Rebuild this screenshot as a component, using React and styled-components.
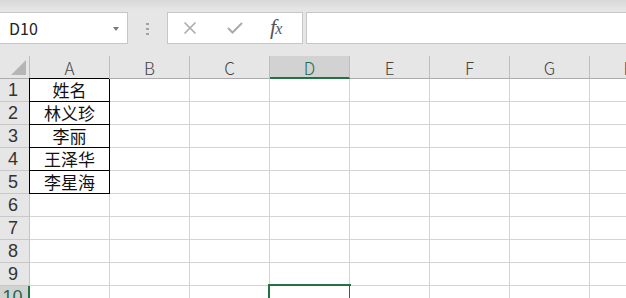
import React from "react";
import styled, { createGlobalStyle } from "styled-components";

const GREEN = "#217346";
const FONT = `"Noto Sans CJK SC", "Noto Sans", sans-serif`;

const Global = createGlobalStyle`
  html, body { margin: 0; padding: 0; overflow: hidden; background: #e6e6e6; }
  body { font-family: ${FONT}; }
  * { box-sizing: border-box; }
`;

const Page = styled.div`
  width: 626px;
  height: 298px;
  overflow: hidden;
  display: flex;
  flex-direction: column;
  background: #e6e6e6;
`;

const Toolbar = styled.div`
  height: 56px;
  flex: none;
  display: flex;
  align-items: flex-start;
  padding-top: 12px;
  background: linear-gradient(#d8d8d8 0px, #e4e4e4 8px, #e6e6e6 12px);
`;

const Box = styled.div`
  height: 32px;
  background: #fff;
  border: 1px solid #c6c6c6;
  display: flex;
  align-items: center;
`;

const NameBox = styled(Box)`
  width: 129px;
  margin-left: -1px;
  padding-left: 9px;
  padding-right: 8px;
  justify-content: space-between;
  font-size: 16px;
  color: #222;
`;

const Caret = styled.span`
  width: 0;
  height: 0;
  border-left: 3.5px solid transparent;
  border-right: 3.5px solid transparent;
  border-top: 4px solid #7a7a7a;
  margin-top: 1px;
`;

const Grip = styled.div`
  width: 39px;
  height: 32px;
  display: flex;
  flex-direction: column;
  align-items: center;
  justify-content: center;
  gap: 3px;
  margin-top: 1px;
`;

const Dot = styled.span`
  width: 3px;
  height: 2px;
  background: #a2a2a2;
`;

const Buttons = styled(Box)`
  width: 136px;
  padding-left: 15px;
  gap: 30px;
`;

const FxText = styled.span`
  font-family: "Liberation Serif", "DejaVu Serif", serif;
  font-style: italic;
  font-size: 22px;
  color: #555;
  margin-left: -3px;
  margin-top: -2px;
  letter-spacing: -1px;
  line-height: 1;
  small { font-size: 16px; }
`;

const FormulaInput = styled(Box)`
  flex: 1;
  margin-left: 3px;
  margin-right: -2px;
`;

const Sheet = styled.div`
  display: grid;
  grid-template-columns: 30px repeat(8, 80px);
  grid-auto-rows: 23px;
  font-family: ${FONT};
`;

const Corner = styled.div`
  position: relative;
  background: #e6e6e6;
  border-right: 1px solid #bdbdbd;
  border-bottom: 1px solid #ababab;
  &::after {
    content: "";
    position: absolute;
    right: 3px;
    bottom: 3px;
    width: 0;
    height: 0;
    border-left: 15px solid transparent;
    border-bottom: 15px solid #b5b5b5;
  }
`;

const ColHead = styled.div`
  background: ${(p) => (p.$selected ? "#d2d2d2" : "#e6e6e6")};
  border-right: 1px solid #bdbdbd;
  border-bottom: ${(p) => (p.$selected ? `2px solid ${GREEN}` : "1px solid #ababab")};
  color: ${(p) => (p.$selected ? "#1e6b45" : "#444")};
  font-size: 17px;
  font-weight: 300;
  display: flex;
  align-items: center;
  justify-content: center;
  line-height: 1;
  padding-top: ${(p) => (p.$selected ? "2px" : "1px")};
`;

const RowHead = styled.div`
  background: ${(p) => (p.$selected ? "#d2d2d2" : "#e6e6e6")};
  border-right: ${(p) => (p.$selected ? `2px solid ${GREEN}` : "1px solid #c4c4c4")};
  border-bottom: 1px solid #c8c8c8;
  color: ${(p) => (p.$selected ? "#1e6b45" : "#333")};
  font-family: "Liberation Sans", Arial, sans-serif;
  font-size: 18px;
  display: flex;
  align-items: flex-end;
  justify-content: center;
  padding-right: 3px;
  padding-bottom: 2px;
  line-height: 1;
`;

const Cell = styled.div`
  position: relative;
  background: #fff;
  border-right: 1px solid ${(p) => (p.$boxed ? "#000" : "#d4d4d4")};
  border-bottom: 1px solid ${(p) => (p.$boxed ? "#000" : "#d4d4d4")};
  box-shadow: ${(p) =>
    p.$boxed ? (p.$top ? "-1px 0 0 #000, -1px -1px 0 #000" : "-1px 0 0 #000") : "none"};
  z-index: ${(p) => (p.$boxed ? 1 : 0)};
  display: flex;
  align-items: flex-end;
  justify-content: center;
  font-size: 17px;
  color: #111;
  line-height: 1;
  padding-bottom: 3px;
`;

const Selection = styled.div`
  position: absolute;
  top: -2px;
  left: -2px;
  right: -2px;
  bottom: -2px;
  border: 2px solid ${GREEN};
  z-index: 2;
`;

const cols = ["A", "B", "C", "D", "E", "F", "G", "H"];
const names = ["姓名", "林义珍", "李丽", "王泽华", "李星海"];

const XIcon = () => (
  <svg width="14" height="14" viewBox="0 0 14 14">
    <path d="M1.5 1.5 L12.5 12.5 M12.5 1.5 L1.5 12.5" stroke="#ababab" strokeWidth="1.6" fill="none" />
  </svg>
);

const CheckIcon = () => (
  <svg width="16" height="14" viewBox="0 0 16 14">
    <path d="M1 7 L5.5 11.5 L15 2" stroke="#ababab" strokeWidth="2" fill="none" />
  </svg>
);

export default function App() {
  const rows = [];
  for (let r = 1; r <= 10; r++) {
    rows.push(
      <RowHead key={`h${r}`} $selected={r === 10}>
        {r}
      </RowHead>
    );
    cols.forEach((c, i) => {
      const boxed = i === 0 && r <= 5;
      rows.push(
        <Cell key={`${c}${r}`} $boxed={boxed} $top={boxed && r === 1}>
          {boxed ? names[r - 1] : null}
          {c === "D" && r === 10 ? <Selection /> : null}
        </Cell>
      );
    });
  }
  return (
    <Page>
      <Global />
      <Toolbar>
        <NameBox>
          D10
          <Caret />
        </NameBox>
        <Grip>
          <Dot />
          <Dot />
          <Dot />
        </Grip>
        <Buttons>
          <XIcon />
          <CheckIcon />
          <FxText>
            f<small>x</small>
          </FxText>
        </Buttons>
        <FormulaInput />
      </Toolbar>
      <Sheet>
        <Corner />
        {cols.map((c) => (
          <ColHead key={c} $selected={c === "D"}>
            {c}
          </ColHead>
        ))}
        {rows}
      </Sheet>
    </Page>
  );
}
